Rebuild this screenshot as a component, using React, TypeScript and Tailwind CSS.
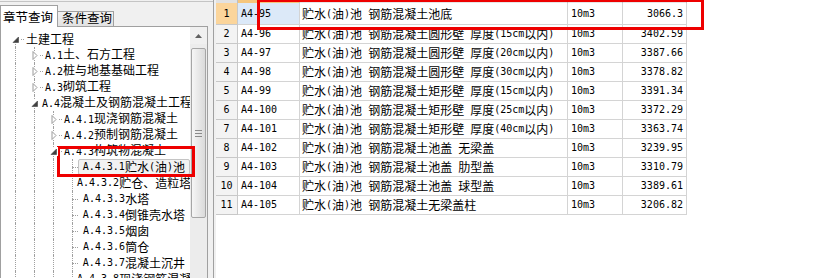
import React from "react";

function M({ s }: { s: string }) {
  const parts = s.match(/[\x00-\x7f]+|[^\x00-\x7f]+/g) ?? [];
  return (
    <>
      {parts.map((p, i) =>
        /^[\x00-\x7f]/.test(p) ? (
          <span key={i} className="[font-family:'DejaVu_Sans_Mono',monospace] text-[10px] whitespace-pre">
            {p}
          </span>
        ) : (
          <span key={i}>{p}</span>
        )
      )}
    </>
  );
}

type TreeRow = {
  level: number;
  text: string;
  exp?: "open" | "closed";
  guides: number[];
  sel?: boolean;
  rootHalf?: boolean;
};

const G1 = [14, 33];
const G2 = [14, 33, 52];
const G3 = [14, 33, 52, 71];

const treeRows: TreeRow[] = [
  { level: 0, text: "土建工程", exp: "open", guides: [], rootHalf: true },
  { level: 1, text: "A.1土、石方工程", exp: "closed", guides: G1 },
  { level: 1, text: "A.2桩与地基基础工程", exp: "closed", guides: G1 },
  { level: 1, text: "A.3砌筑工程", exp: "closed", guides: G1 },
  { level: 1, text: "A.4混凝土及钢筋混凝土工程", exp: "open", guides: G1 },
  { level: 2, text: "A.4.1现浇钢筋混凝土", exp: "closed", guides: G2 },
  { level: 2, text: "A.4.2预制钢筋混凝土", exp: "closed", guides: G2 },
  { level: 2, text: "A.4.3构筑物混凝土", exp: "open", guides: G2 },
  { level: 3, text: "A.4.3.1贮水(油)池", guides: G3, sel: true },
  { level: 3, text: "A.4.3.2贮仓、造粒塔", guides: G3 },
  { level: 3, text: "A.4.3.3水塔", guides: G3 },
  { level: 3, text: "A.4.3.4倒锥壳水塔", guides: G3 },
  { level: 3, text: "A.4.3.5烟囱", guides: G3 },
  { level: 3, text: "A.4.3.6筒仓", guides: G3 },
  { level: 3, text: "A.4.3.7混凝土沉井", guides: G3 },
  { level: 3, text: "A.4.3.8现浇钢筋混凝土", guides: G3 },
];

const guideLeft: Record<number, string> = {
  14: "left-[14px]",
  33: "left-[33px]",
  52: "left-[52px]",
  71: "left-[71px]",
};

const levelPad = ["pl-[10px]", "pl-[29px]", "pl-[48px]", "pl-[71px]"];

function Expander({ kind }: { kind: "open" | "closed" }) {
  return (
    <span className="relative z-10 flex h-[9px] w-[9px] items-center justify-center bg-white">
      <svg width="9" height="9" viewBox="0 0 9 9">
        {kind === "open" ? (
          <polygon points="7.5,2 7.5,7.5 2,7.5" fill="#404040" stroke="#404040" strokeWidth="0.6" />
        ) : (
          <polygon points="3,0.5 7,4.5 3,8.5" fill="#ffffff" stroke="#9a9a9a" strokeWidth="1" />
        )}
      </svg>
    </span>
  );
}

function Tree() {
  return (
    <div className="flex-1 overflow-hidden pt-[4px]">
      {treeRows.map((r, i) => (
        <div key={i} className={`relative flex h-[16px] items-center whitespace-nowrap leading-[16px] ${levelPad[r.level]}`}>
          {r.guides.map((g) => (
            <div key={g} className={`absolute top-0 bottom-0 border-l border-dotted border-[#a0a0a0] ${guideLeft[g]}`} />
          ))}
          {r.rootHalf && <div className="absolute top-[8px] bottom-0 left-[14px] border-l border-dotted border-[#a0a0a0]" />}
          {r.exp ? (
            <>
              <Expander kind={r.exp} />
              <span className="ml-[1px] mr-[2px] w-[3px] border-t border-dotted border-[#a0a0a0]" />
              <span className="text-black">
                <M s={r.text} />
              </span>
            </>
          ) : (
            <>
              <span className="w-[6px] border-t border-dotted border-[#a0a0a0]" />
              <span
                className={`flex h-[16px] items-center rounded-[2px] border px-[4px] ${
                  r.sel ? "border-[#c4c4c4] bg-[#f2f2f2]" : "border-transparent"
                }`}
              >
                <M s={r.text} />
              </span>
            </>
          )}
        </div>
      ))}
    </div>
  );
}

function Scrollbar() {
  return (
    <div className="flex w-[17px] flex-col bg-[#ececec]">
      <div className="flex h-[17px] items-center justify-center bg-[#f0f0f0]">
        <svg width="7" height="4" viewBox="0 0 7 4">
          <polygon points="0,4 3.5,0 7,4" fill="#606060" />
        </svg>
      </div>
      <div className="mx-[1px] mt-[4px] flex h-[170px] items-center justify-center rounded-[2px] border border-[#a6a6a6] bg-linear-to-r from-[#f6f6f6] to-[#dadada]">
        <div className="flex flex-col gap-[2px]">
          <div className="h-px w-[7px] bg-[#8a8a8a]" />
          <div className="h-px w-[7px] bg-[#8a8a8a]" />
          <div className="h-px w-[7px] bg-[#8a8a8a]" />
        </div>
      </div>
    </div>
  );
}

function LeftPanel() {
  return (
    <div className="flex h-[300px] w-[214px] shrink-0 flex-col border-r border-[#a0a0a0] bg-[#f0f0f0]">
      <div className="mt-[1px] flex h-[25px] items-end border-t border-[#c4c4c4] text-[12.5px] leading-[16px]">
        <div className="relative z-10 -mb-px flex h-[22px] w-[58px] items-start border border-b-0 border-[#a0a0a0] bg-white pl-[2px] pt-[3px]">
          章节查询
        </div>
        <div className="flex h-[15px] w-[56px] items-end border border-b-0 border-l-0 border-[#a0a0a0] bg-linear-to-b from-[#f2f2f2] to-[#e2e2e2] pl-[4px]">
          条件查询
        </div>
      </div>
      <div className="flex w-[208px] flex-1 border border-[#a0a0a0] bg-white">
        <Tree />
        <Scrollbar />
      </div>
    </div>
  );
}

const tableRows: [string, string, string, string, string][] = [
  ["1", "A4-95", "贮水(油)池 钢筋混凝土池底", "10m3", "3066.3"],
  ["2", "A4-96", "贮水(油)池 钢筋混凝土圆形壁 厚度(15cm以内)", "10m3", "3402.59"],
  ["3", "A4-97", "贮水(油)池 钢筋混凝土圆形壁 厚度(20cm以内)", "10m3", "3387.66"],
  ["4", "A4-98", "贮水(油)池 钢筋混凝土圆形壁 厚度(30cm以内)", "10m3", "3378.82"],
  ["5", "A4-99", "贮水(油)池 钢筋混凝土矩形壁 厚度(15cm以内)", "10m3", "3391.34"],
  ["6", "A4-100", "贮水(油)池 钢筋混凝土矩形壁 厚度(25cm以内)", "10m3", "3372.29"],
  ["7", "A4-101", "贮水(油)池 钢筋混凝土矩形壁 厚度(40cm以内)", "10m3", "3363.74"],
  ["8", "A4-102", "贮水(油)池 钢筋混凝土池盖 无梁盖", "10m3", "3239.95"],
  ["9", "A4-103", "贮水(油)池 钢筋混凝土池盖 肋型盖", "10m3", "3310.79"],
  ["10", "A4-104", "贮水(油)池 钢筋混凝土池盖 球型盖", "10m3", "3389.61"],
  ["11", "A4-105", "贮水(油)池 钢筋混凝土无梁盖柱", "10m3", "3206.82"],
];

function Grid() {
  return (
    <div className="flex-1 bg-white text-[12px] leading-[16px]">
      <div className="flex h-[3px]">
        <div className="w-[22px] border-r border-[#c0c0c0] bg-[#e2e2e2]" />
        <div className="w-[62px] border-r border-[#c0c0c0] bg-[#f6c67c]" />
        <div className="w-[268px] border-r border-[#c0c0c0] bg-[#e6e6e6]" />
        <div className="w-[55px] border-r border-[#c0c0c0] bg-[#e6e6e6]" />
        <div className="w-[64px] border-r border-[#c0c0c0] bg-[#e6e6e6]" />
      </div>
      {tableRows.map((r, i) => {
        const first = i === 0;
        return (
          <div key={i} className={`flex whitespace-nowrap ${first ? "h-[22px]" : "h-[19px]"}`}>
            <div
              className={`flex w-[22px] items-center justify-center border-r border-b border-[#c8c8c8] ${
                first ? "bg-[#fbd59b]" : "bg-[#f3f3f3]"
              }`}
            >
              <M s={r[0]} />
            </div>
            <div
              className={`flex w-[62px] items-center border-r border-b border-[#d4d4d4] pl-[3px] ${
                first ? "bg-[#dce9f8]" : ""
              }`}
            >
              <M s={r[1]} />
            </div>
            <div className="flex w-[268px] items-center overflow-hidden border-r border-b border-[#d4d4d4] pl-[2px]">
              <M s={r[2]} />
            </div>
            <div className="flex w-[55px] items-center border-r border-b border-[#d4d4d4] pl-[3px]">
              <M s={r[3]} />
            </div>
            <div className="flex w-[64px] items-center justify-end border-r border-b border-[#d4d4d4] pr-[3px]">
              <M s={r[4]} />
            </div>
          </div>
        );
      })}
    </div>
  );
}

export default function App() {
  return (
    <div className="relative flex h-[278px] w-[821px] overflow-hidden bg-white text-[12px] text-black [font-family:'Noto_Sans_CJK_SC',sans-serif]">
      <LeftPanel />
      <div className="w-[2px] shrink-0 bg-[#f0f0f0]" />
      <Grid />
      <div className="absolute left-[57px] top-[146px] h-[31px] w-[138px] border-[3px] border-[#ee0000]" />
      <div className="absolute left-[257px] top-[-1px] h-[31px] w-[447px] border-[3px] border-[#ee0000]" />
    </div>
  );
}
